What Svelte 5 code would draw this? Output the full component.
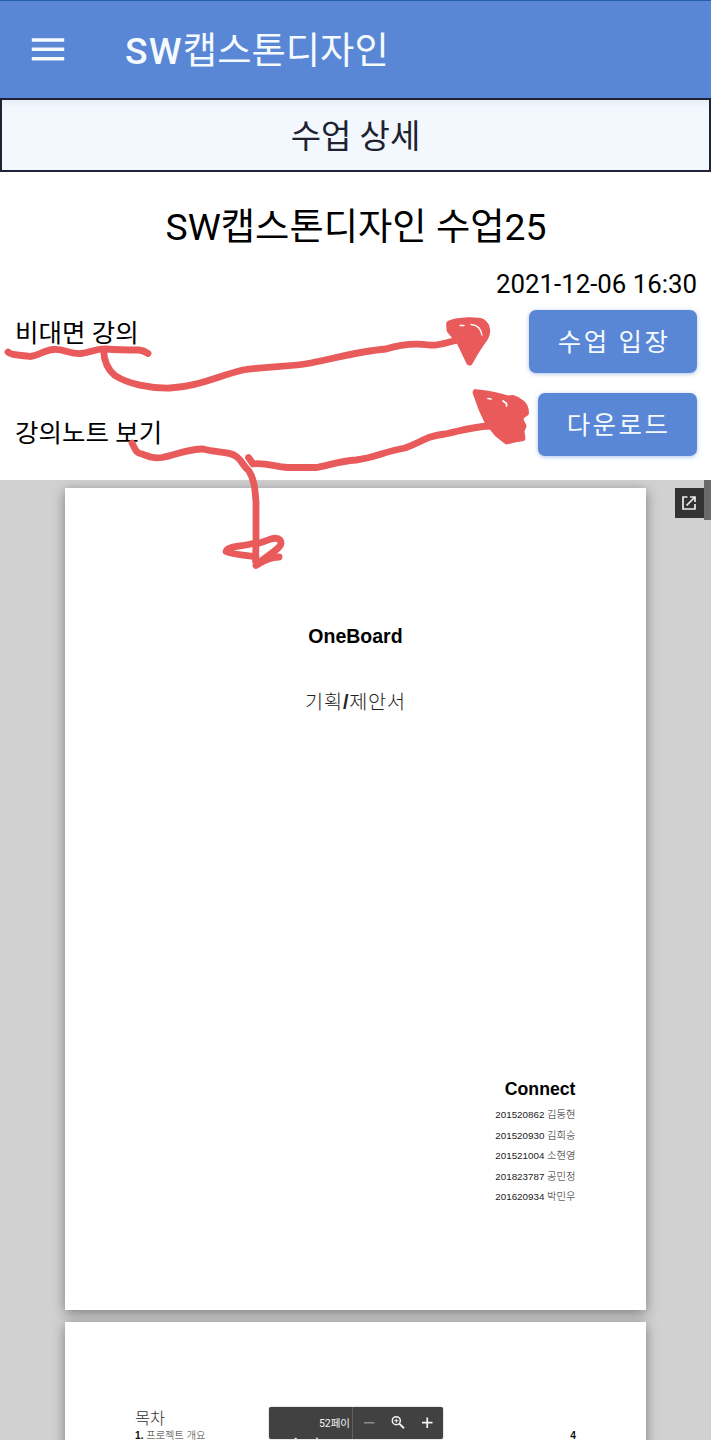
<script>
  const members = [
    ['201520862', '김동현'],
    ['201520930', '김희승'],
    ['201521004', '소현영'],
    ['201823787', '공민정'],
    ['201620934', '박민우'],
  ];
</script>

<div class="screen">
  <header class="appbar">
    <svg class="menu" width="34" height="24" viewBox="0 0 34 24" aria-hidden="true">
      <path d="M0.8 2H33.2M0.8 11.3H33.2M0.8 20.7H33.2" stroke="#f5faff" stroke-width="3.5" />
    </svg>
    <h1>SW<span>캡스톤디자인</span></h1>
  </header>

  <div class="section-title">수업 상세</div>

  <main>
    <h2>SW캡스톤디자인 수업25</h2>
    <time>2021-12-06 16:30</time>
    <div class="row">
      <span>비대면 강의</span>
      <button>수업 입장</button>
    </div>
    <div class="row second">
      <span>강의노트 보기</span>
      <button>다운로드</button>
    </div>
  </main>

  <section class="viewer">
    <article class="page cover">
      <h3>OneBoard</h3>
      <p class="subtitle">기획<b>/</b>제안서</p>
      <div class="team">
        <h4>Connect</h4>
        {#each members as [id, name]}
          <p>{id} <span>{name}</span></p>
        {/each}
      </div>
    </article>
    <article class="page contents">
      <h5>목차</h5>
      <div class="entry"><span><b>1.</b> 프로젝트 개요</span><b>4</b></div>
    </article>

    <div class="scrollbar"></div>
    <div class="popout">
      <svg width="16" height="16" viewBox="0 0 16 16" fill="none" stroke="#eee" stroke-width="1.7" aria-hidden="true">
        <path d="M6.500 2H2V14H14V9M9 2H14V7M14 2L5.500 10.500" />
      </svg>
    </div>
    <div class="toolbar">
      <div class="count">52페이</div>
      <svg width="90" height="32" viewBox="0 0 90 32" fill="none" aria-hidden="true">
        <path d="M11 15.7H21.500" stroke="#8d8d8d" stroke-width="1.5" />
        <circle cx="43.300" cy="13.700" r="4" stroke="#f4f4f4" stroke-width="1.5" />
        <path d="M46.200 16.600L51 21.300" stroke="#f4f4f4" stroke-width="1.900" />
        <path d="M41.300 13.700H45.300M43.300 11.700V15.700" stroke="#f4f4f4" stroke-width="1" />
        <path d="M69 15.700H79.500M74.250 10.500V21" stroke="#f4f4f4" stroke-width="1.700" />
      </svg>
      <svg class="ticks" width="30" height="2" viewBox="0 0 30 2" aria-hidden="true">
        <path d="M1 2L3 .5L4 2M23 2L24 0L25 2" fill="#fff" />
      </svg>
    </div>
  </section>

  <svg class="ink" width="711" height="600" viewBox="0 0 711 600" fill="none" stroke="#e95a5b" stroke-width="6.800" stroke-linecap="round" stroke-linejoin="round" aria-hidden="true">
    <path d="M8 352C11 355.500 21 355 30 356.500C39 356 43 350 54 349.500C65 349 69 354 81 353.500C90 353 95 348.500 106 349C119 350 129 350 139 350C144 350.500 146 352 148 353.500" />
    <path d="M103.500 350C104 360 108 370 115 375.500C128 384 150 388.500 170 388C196 387 218 376 243 370C267 366 290 367 311 363C340 357 361 351 386 349C402 344 414 343 429 345C440 346 447 342 458 340" />
    <path d="M449.500 324C460 320 476 320 482 322C488 326 488 333 484 339C478 347 474 354 469.500 362L460 342L450 330Z" fill="#e95a5b" />
    <path d="M460 325.500H464M471 324.500C478 325 481 329 482 335" stroke="#fff" stroke-width="1.400" />
    <path d="M132 443C135 449 136 453 142 454C150 457 154 458.500 162 457.500C176 455 187 449 203 449C217 453 230 451 237 457C243 462 243 466 249 471C255 481 255 491 256 502V544L255.500 561" />
    <path d="M248.500 457.500L253 464C264 462 275 467 288 467.500H317C330 465 340 461 356 460C374 458 386 451 405 448C422 442 426 436 445 434C460 431 470 427 490 426" />
    <path d="M476 392.500L482 409L488 422L498 434L507 441L515 439L522 438L521 431L523 426L520 420L521 416L525.500 413C526 405 519 400 513 398.500L508 399C496 395 487 394 476 392.500Z" fill="#e95a5b" />
    <path d="M503 401L506.500 403.500V406M488 398.500L491 399" stroke="#fff" stroke-width="1.700" />
    <path d="M255.500 544C266 542 275 535 280 540C285 547 271 552 256 565.500C264 560 272 557 279 557M256 557C245 555 234 555 226 551.500C227 546 241 547 255 543" />
  </svg>
</div>

<style>
  :global(body) { background: #fff; }
  h1, h2, h3, h4, h5, p { margin: 0; font-weight: 400; }
  .screen {
    position: relative;
    width: 711px;
    height: 1440px;
    overflow: hidden;
    display: flex;
    flex-direction: column;
    color: #000;
    font-family: Roboto, "Noto Sans CJK KR", sans-serif;
  }
  .appbar {
    box-sizing: border-box;
    height: 98px;
    flex: none;
    display: flex;
    align-items: center;
    gap: 60px;
    padding: 2px 31px 0;
    background: #5987d6;
    border-top: 1px solid #2260ab;
  }
  .menu { flex: none; margin-top: -2px; }
  h1 { padding-top: 1px; color: #f5faff; font-size: 37.300px; font-weight: 500; line-height: 44px; letter-spacing: 1.200px; white-space: nowrap; }
  h1 span { letter-spacing: 0; font-weight: 400; }
  .section-title {
    box-sizing: border-box;
    height: 74px;
    flex: none;
    border: 2px solid #202235;
    background: linear-gradient(#e9edf6, #f3f8ff 8px);
    color: #202230;
    font-size: 33px;
    line-height: 73px;
    text-align: center;
  }
  main {
    box-sizing: border-box;
    height: 308px;
    flex: none;
    display: flex;
    flex-direction: column;
    padding: 31px 14px 0 15px;
  }
  h2 { font-size: 37.300px; line-height: 48px; text-align: center; white-space: nowrap; }
  time { margin-top: 17px; font-size: 25.800px; line-height: 32px; text-align: right; }
  .row { display: flex; justify-content: space-between; height: 63px; margin-top: 10px; font-size: 25.500px; }
  .row.second { margin-top: 20px; }
  .row span { line-height: 47px; }
  .row.second span { line-height: 81px; }
  button {
    box-sizing: border-box;
    height: 63px;
    border: 0;
    border-radius: 7px;
    padding: 2px 26.500px 0 29px;
    background: #5987d6;
    color: #f5faff;
    box-shadow: 0 1px 4px #5987d680;
    font: 400 25.500px/61px Roboto, "Noto Sans CJK KR", sans-serif;
    letter-spacing: 2.500px;
    white-space: nowrap;
  }
  .viewer {
    position: relative;
    flex: 1;
    overflow: hidden;
    padding: 8px 65px 0;
    background: #d1d1d1;
    font-family: "Liberation Sans", "Noto Sans CJK KR", sans-serif;
  }
  .page {
    box-sizing: border-box;
    height: 822px;
    margin-bottom: 12px;
    background: #fff;
    box-shadow: 0 3px 12px #0006;
    overflow: hidden;
  }
  h3 { margin-top: 136px; font-size: 19.500px; line-height: 24px; font-weight: 700; text-align: center; }
  .subtitle { margin-top: 41px; font-size: 19.700px; line-height: 26px; font-weight: 300; letter-spacing: .8px; text-align: center; color: #222; }
  .subtitle b { font-weight: 700; }
  .team { margin: 362px 70.500px 0 0; text-align: right; }
  h4 { font-size: 17.700px; font-weight: 700; line-height: 24px; margin-bottom: 4px; }
  .team p { font-size: 9.800px; line-height: 20.500px; color: #222; }
  .team span { font-size: 10.300px; font-weight: 300; }
  .contents { padding: 84px 70px 0; color: #333; }
  h5 { font-size: 16.400px; font-weight: 300; line-height: 24px; }
  .entry { display: flex; justify-content: space-between; font-size: 10.200px; font-weight: 300; line-height: 12px; }
  .entry b { color: #111; font-weight: 700; }
  .scrollbar { position: absolute; top: 0; right: 0; width: 7px; height: 40px; background: #6b6b6b; }
  .popout {
    position: absolute;
    top: 8px;
    right: 7px;
    width: 29px;
    height: 30px;
    display: grid;
    place-items: center;
    background: #333;
  }
  .popout svg { margin-right: 2px; }
  .toolbar {
    position: absolute;
    left: 269px;
    top: 927px;
    width: 174px;
    height: 32px;
    display: flex;
    background: #414141;
    border-radius: 2px;
    box-shadow: 0 0 2px #0005;
    overflow: hidden;
  }
  .count {
    box-sizing: border-box;
    width: 84px;
    padding-right: 2px;
    border-right: 1px solid #606060;
    color: #f4f4f4;
    font: 400 10.500px/33px Roboto, "Noto Sans CJK KR", sans-serif;
    text-align: right;
  }
  .ticks { position: absolute; left: 24px; bottom: 0; }
  .ink { position: absolute; left: 0; top: 0; pointer-events: none; }
</style>
